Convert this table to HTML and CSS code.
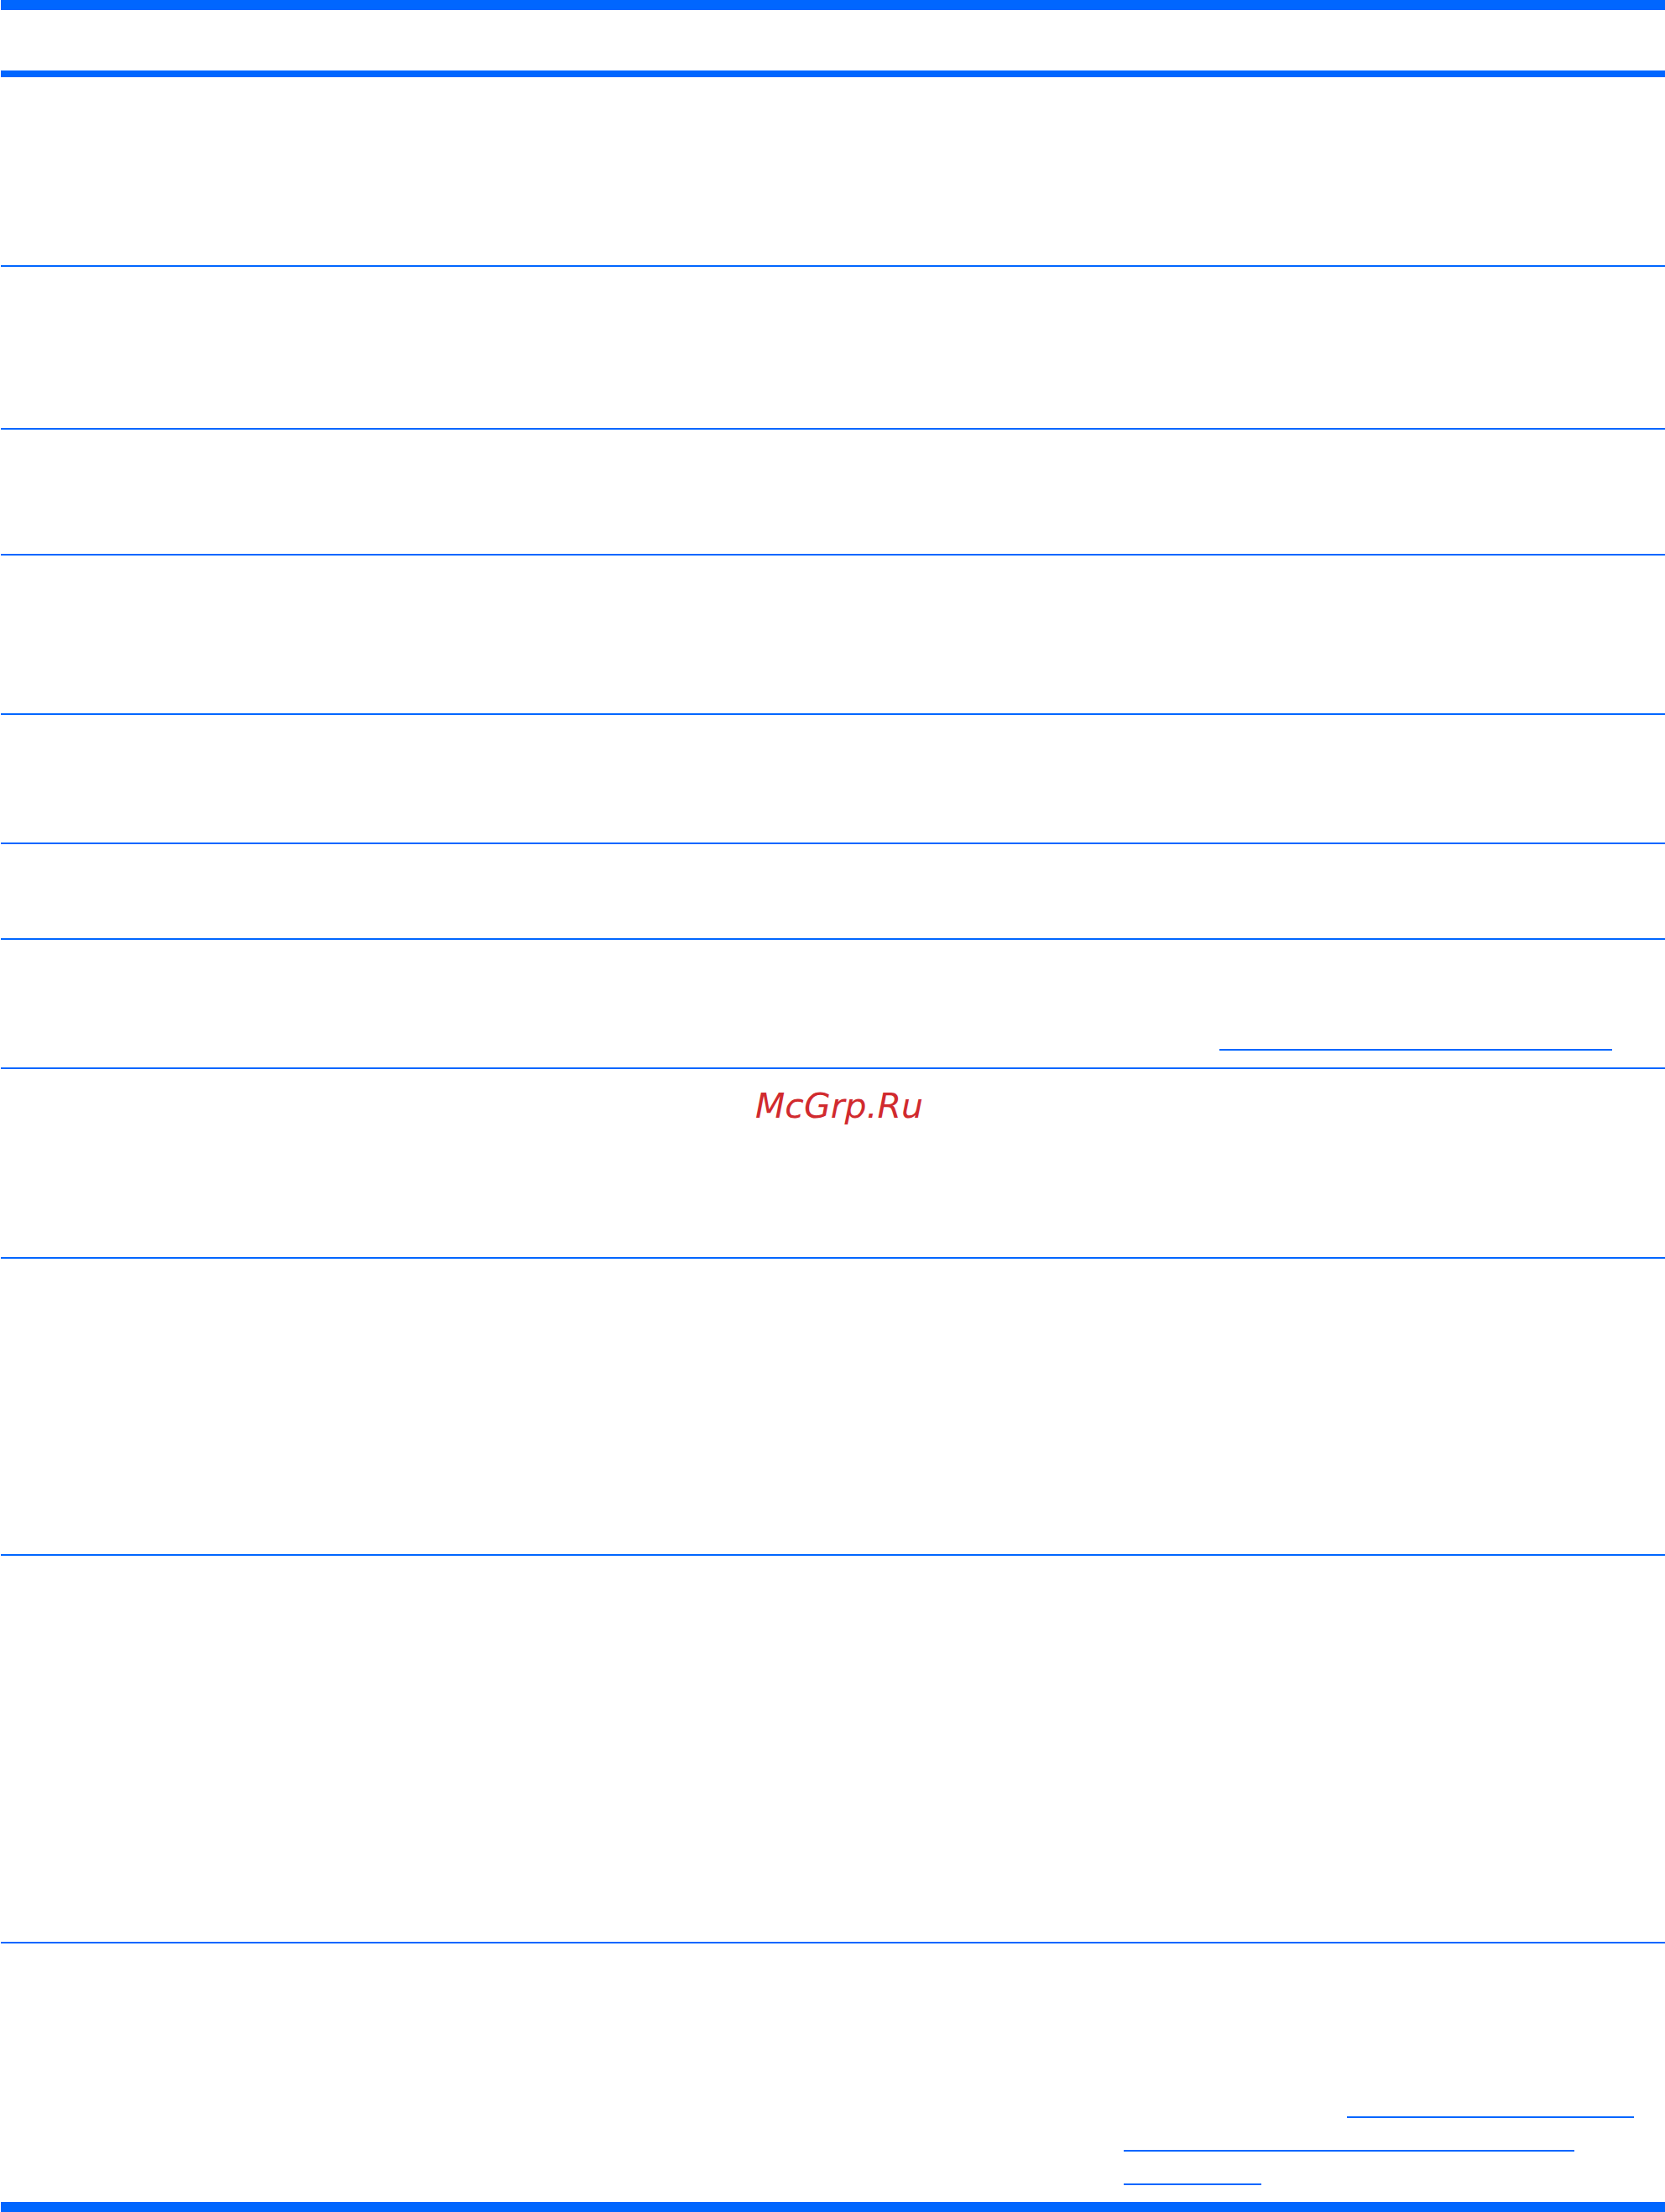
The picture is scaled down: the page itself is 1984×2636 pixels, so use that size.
FILE: index.html
```html
<!DOCTYPE html>
<html>
<head>
<meta charset="utf-8">
<title>Table</title>
<link rel="stylesheet" href="styles.css">
</head>
<body>
<div class="sheet">
  <div class="bar bar-top"></div>
  <div class="head"></div>
  <div class="rule-thick"></div>
  <div class="row r1"></div>
  <div class="row r2"></div>
  <div class="row r3"></div>
  <div class="row r4"></div>
  <div class="row r5"></div>
  <div class="row r6"></div>
  <div class="row r7">
    <div class="links links-r7">
      <a class="link-line w468" href="#"></a>
    </div>
  </div>
  <div class="row r8">
    <div class="watermark">McGrp.Ru</div>
  </div>
  <div class="row r9"></div>
  <div class="row r10"></div>
  <div class="row r11 last">
    <div class="links links-r11">
      <div class="line-wrap first"><a class="link-line w342" href="#"></a></div>
      <div class="line-wrap"><a class="link-line w537" href="#"></a></div>
      <div class="line-wrap"><a class="link-line w164" href="#"></a></div>
    </div>
  </div>
  <div class="bar bar-bottom"></div>
</div>
</body>
</html>
```

FILE: styles.css
```css
html, body {
  margin: 0;
  padding: 0;
  background: #ffffff;
}

body {
  font-family: "DejaVu Sans", "Liberation Sans", sans-serif;
}

.sheet {
  margin-left: 1px;
  width: 1983px;
  display: flex;
  flex-direction: column;
}

.bar {
  background: #0066ff;
  height: 12px;
}

.head {
  height: 72px;
}

.rule-thick {
  height: 8px;
  background: #0066ff;
}

.row {
  box-sizing: border-box;
  border-bottom: 2px solid #0066ff;
}

.row.last {
  border-bottom: none;
}

.r1 { height: 226px; }
.r2 { height: 194px; }
.r3 { height: 150px; }
.r4 { height: 190px; }
.r5 { height: 154px; }
.r6 { height: 114px; }
.r7 { height: 154px; }
.r8 { height: 226px; }
.r9 { height: 354px; }
.r10 { height: 462px; }
.r11 { height: 308px; }

.links {
  display: flex;
  flex-direction: column;
}

.links-r7 {
  padding-top: 92px;
  padding-left: 1452px;
}

.links-r11 {
  padding-top: 168px;
  padding-left: 1338px;
}

.line-wrap {
  display: flex;
}

.line-wrap.first {
  padding-left: 266px;
}

.link-line {
  display: block;
  box-sizing: border-box;
  height: 40px;
  border-bottom: 2px solid #0066ff;
  text-decoration: none;
}

.w468 { width: 468px; }
.w342 { width: 342px; }
.w537 { width: 537px; }
.w164 { width: 164px; }

.watermark {
  padding-top: 20px;
  padding-left: 899px;
  font-family: "DejaVu Sans", sans-serif;
  font-style: italic;
  font-size: 41px;
  line-height: 48px;
  color: #d12a2e;
}
```
